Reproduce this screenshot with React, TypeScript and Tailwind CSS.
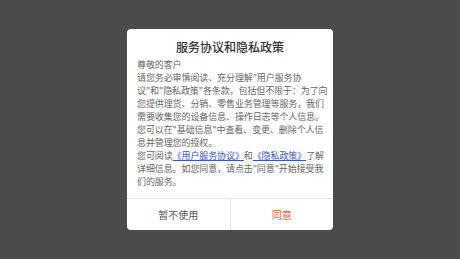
const BODY_LINES = [
  '尊敬的客户',
  '请您务必审慎阅读、充分理解"用户服务协',
  '议"和"隐私政策"各条款，包括但不限于：为了向',
  '您提供理货、分销、零售业务管理等服务，我们',
  '需要收集您的设备信息、操作日志等个人信息。',
  '您可以在"基础信息"中查看、变更、删除个人信',
  '息并管理您的授权。',
];

function PrivacyDialog() {
  return (
    <div className="w-[206px] bg-white rounded-[4px] overflow-hidden">
      <div className="px-[10px] pt-[10px] pb-[10px]">
        <h2 className="text-center text-[12px] leading-[16px] font-medium text-[#333]">服务协议和隐私政策</h2>
        <div className="mt-[3.5px] text-[9px] leading-[13px] tracking-[-0.1px] text-[#666] whitespace-nowrap">
          {BODY_LINES.map((line) => (
            <div key={line}>{line}</div>
          ))}
          <div>
            您可阅读<span className="text-[#3a55c8] underline">《用户服务协议》</span>和<span className="text-[#3a55c8] underline">《隐私政策》</span>了解
          </div>
          <div>详细信息。如您同意，请点击"同意"开始接受我</div>
          <div>们的服务。</div>
        </div>
      </div>
      <div className="flex h-[32px] border-t border-[#e6e6e6] text-[10px]">
        <button className="flex-1 flex items-center justify-center text-[#555]">暂不使用</button>
        <button className="flex-1 flex items-center justify-center text-[#e8584a] border-l border-[#e6e6e6]">同意</button>
      </div>
    </div>
  );
}

export default function App() {
  return (
    <div
      className="w-[460px] h-[259px] bg-[#4b4b4b] flex items-center justify-center"
      style={{ fontFamily: '"Noto Sans CJK SC", "Noto Sans", sans-serif' }}
    >
      <PrivacyDialog />
    </div>
  );
}
